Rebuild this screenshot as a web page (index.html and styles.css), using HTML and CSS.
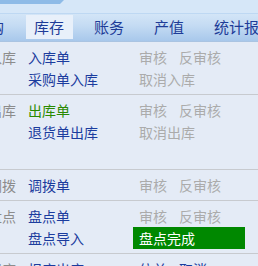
FILE: index.html
```html
<!DOCTYPE html>
<html lang="zh">
<head>
<meta charset="utf-8">
<title>库存</title>
<link rel="stylesheet" href="styles.css">
</head>
<body>
<div class="top"><div class="top-tab"></div></div>
<nav class="nav">
  <a class="nav-item">采购</a>
  <a class="nav-item active">库存</a>
  <a class="nav-item">账务</a>
  <a class="nav-item">产值</a>
  <a class="nav-item">统计报表</a>
</nav>
<main class="menu">
  <section class="group">
    <div class="label">入库</div>
    <div class="links"><a class="link">入库单</a><a class="link">采购单入库</a></div>
    <div class="actions">
      <div class="action-row"><span>审核</span><span>反审核</span></div>
      <div class="action-row"><span>取消入库</span></div>
    </div>
  </section>
  <section class="group">
    <div class="label">出库</div>
    <div class="links"><a class="link link-green">出库单</a><a class="link">退货单出库</a><span class="link">&nbsp;</span></div>
    <div class="actions">
      <div class="action-row"><span>审核</span><span>反审核</span></div>
      <div class="action-row"><span>取消出库</span></div>
    </div>
  </section>
  <section class="group">
    <div class="label">调拨</div>
    <div class="links"><a class="link">调拨单</a></div>
    <div class="actions">
      <div class="action-row"><span>审核</span><span>反审核</span></div>
    </div>
  </section>
  <section class="group">
    <div class="label">盘点</div>
    <div class="links"><a class="link">盘点单</a><a class="link">盘点导入</a></div>
    <div class="actions">
      <div class="action-row"><span>审核</span><span>反审核</span></div>
      <div class="action-row done"><span>盘点完成</span></div>
    </div>
  </section>
  <section class="group">
    <div class="label">报废</div>
    <div class="links"><a class="link">报废出库</a></div>
    <div class="actions">
      <div class="action-row blue"><span>仿单</span><span>取消</span></div>
    </div>
  </section>
</main>
</body>
</html>
```
FILE: styles.css
```css
html, body {
  margin: 0;
  padding: 0;
}
body {
  background: #e4ebf6;
  font-family: "Noto Sans CJK SC", "Noto Sans", sans-serif;
  font-size: 14px;
  overflow: hidden;
}
.top {
  height: 13px;
  background: #d6e7f8;
}
.top-tab {
  width: 64px;
  height: 4px;
  background: #8ebbe7;
  clip-path: polygon(0 0, 100% 0, calc(100% - 4px) 100%, 0 100%);
}
.nav {
  display: flex;
  margin-left: -41px;
  background: linear-gradient(#a9cbee 0, #d3e5f7 1px, #c4dbf3 45%, #a8c8eb 100%);
  border-bottom: 1px solid #aac4e2;
  box-sizing: border-box;
  height: 29px;
}
.nav-item {
  margin: 2px 7px 0;
  padding: 0 8px;
  height: 24px;
  line-height: 24px;
  font-size: 15px;
  color: #1e3c98;
  white-space: nowrap;
}
.nav-item.active {
  background: #e8f0fa;
  padding: 0 9px 0 8px;
  margin-right: 6px;
}
.menu {
  margin-left: -24px;
}
.group {
  display: grid;
  grid-template-columns: 40px 93px 112px;
  column-gap: 12px;
  padding: 4px 0;
  border-bottom: 1px solid #c7cacf;
  line-height: 22px;
  width: 400px;
}
.label {
  text-align: right;
  color: #8c8c8c;
  white-space: nowrap;
}
.links {
  display: flex;
  flex-direction: column;
}
.link {
  color: #1b3c9e;
  white-space: nowrap;
}
.link-green {
  color: #2a8a00;
}
.actions {
  display: flex;
  flex-direction: column;
}
.action-row {
  display: flex;
  gap: 12px;
  padding-left: 6px;
  color: #ababab;
  height: 22px;
}
.action-row.done {
  background: #008800;
  color: #ffffff;
}
.action-row.blue {
  color: #1b3c9e;
}
```
